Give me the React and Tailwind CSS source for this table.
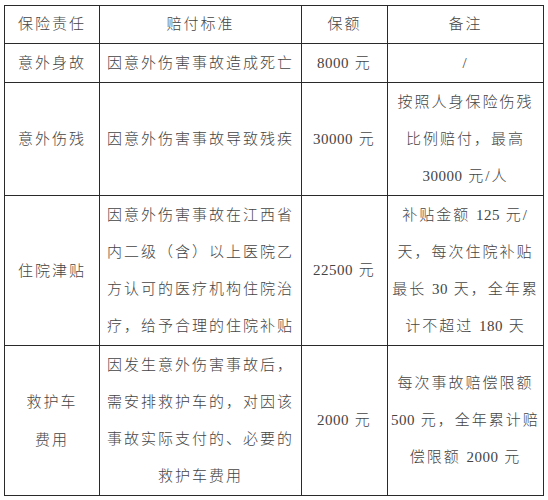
const rows = [
  {
    h: "h-[38px]",
    name: ["意外身故"],
    desc: ["因意外伤害事故造成死亡"],
    amount: "8000 元",
    note: ["/"],
  },
  {
    h: "h-[113px]",
    name: ["意外伤残"],
    desc: ["因意外伤害事故导致残疾"],
    amount: "30000 元",
    note: ["按照人身保险伤残", "比例赔付，最高", "30000 元/人"],
  },
  {
    h: "h-[150px]",
    name: ["住院津贴"],
    desc: ["因意外伤害事故在江西省", "内二级（含）以上医院乙", "方认可的医疗机构住院治", "疗，给予合理的住院补贴"],
    amount: "22500 元",
    note: ["补贴金额 125 元/", "天，每次住院补贴", "最长 30 天，全年累", "计不超过 180 天"],
  },
  {
    h: "h-[150px]",
    name: ["救护车", "费用"],
    desc: ["因发生意外伤害事故后，", "需安排救护车的，对因该", "事故实际支付的、必要的", "救护车费用"],
    amount: "2000 元",
    note: ["每次事故赔偿限额", "500 元，全年累计赔", "偿限额 2000 元"],
  },
];

function Text({ value }) {
  const parts = value.split(/([0-9]+)/).filter(Boolean);
  return parts.map((p, i) =>
    /^[0-9]+$/.test(p) ? (
      <span key={i} className="tracking-[0.5px]">
        {p}
      </span>
    ) : (
      <span key={i}>{p}</span>
    )
  );
}

function Lines({ lines, lh = "leading-[37px]" }) {
  return (
    <div className={lh}>
      {lines.map((l) => (
        <div key={l} className="whitespace-pre">
          <Text value={l} />
        </div>
      ))}
    </div>
  );
}

export default function App() {
  const cell = "border border-[#2a2a2a] text-center align-middle p-0";
  return (
    <div
      className="min-h-[500px] bg-white pl-[4px] pt-[5px] text-[15px] tracking-[2px] text-[#444]"
      style={{ fontFamily: '"Liberation Serif", "Noto Sans CJK SC", serif' }}
    >
      <table className="w-[539px] table-fixed border-collapse font-light">
        <colgroup>
          <col className="w-[95px]" />
          <col className="w-[202px]" />
          <col className="w-[86px]" />
          <col className="w-[156px]" />
        </colgroup>
        <tbody>
          <tr className="h-[38px]">
            <td className={cell}>保险责任</td>
            <td className={cell}>赔付标准</td>
            <td className={cell}>保额</td>
            <td className={cell}>备注</td>
          </tr>
          {rows.map((r) => (
            <tr key={r.name[0]} className={r.h}>
              <td className={cell}>
                <Lines lines={r.name} lh="leading-[38px]" />
              </td>
              <td className={cell}>
                <Lines lines={r.desc} />
              </td>
              <td className={cell}>
                <Text value={r.amount} />
              </td>
              <td className={cell}>
                <Lines lines={r.note} />
              </td>
            </tr>
          ))}
        </tbody>
      </table>
    </div>
  );
}
